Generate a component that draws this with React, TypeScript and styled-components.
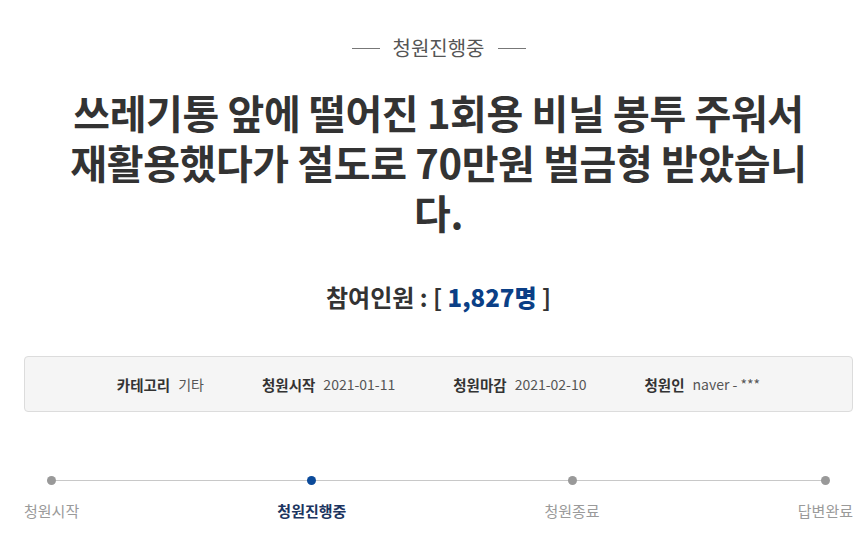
import styled, { createGlobalStyle } from 'styled-components'

const GlobalStyle = createGlobalStyle`
  * { box-sizing: border-box; }
  body {
    margin: 0;
    background: #fff;
    font-family: 'Noto Sans CJK KR', 'Noto Sans', sans-serif;
    color: #333;
  }
`

const steps = [
  { label: '청원시작', active: false },
  { label: '청원진행중', active: true },
  { label: '청원종료', active: false },
  { label: '답변완료', active: false },
]

const info = [
  { term: '카테고리', value: '기타' },
  { term: '청원시작', value: '2021-01-11' },
  { term: '청원마감', value: '2021-02-10' },
  { term: '청원인', value: 'naver - ***' },
]

export default function App() {
  return (
    <Page>
      <GlobalStyle />
      <Status>청원진행중</Status>
      <Title>쓰레기통 앞에 떨어진 1회용 비닐 봉투 주워서 재활용했다가 절도로 70만원 벌금형 받았습니다.</Title>
      <Count>
        참여인원 : [ <strong>1,827명</strong> ]
      </Count>
      <InfoBox>
        {info.map((row) => (
          <InfoItem key={row.term}>
            <b>{row.term}</b>
            <span>{row.value}</span>
          </InfoItem>
        ))}
      </InfoBox>
      <Steps>
        {steps.map((step) => (
          <Step key={step.label} $active={step.active}>
            <Dot $active={step.active} />
            {step.label}
          </Step>
        ))}
      </Steps>
    </Page>
  )
}

const Page = styled.div`
  width: 861px;
  padding: 34px 8px 0 24px;
  display: flex;
  flex-direction: column;
  align-items: center;
`

const Status = styled.div`
  display: flex;
  align-items: center;
  gap: 13px;
  font-size: 20px;
  line-height: 28px;
  color: #555;

  &::before,
  &::after {
    content: '';
    width: 28px;
    height: 1px;
    background: #777;
  }
`

const Title = styled.h1`
  margin: 25px 0 0;
  width: 750px;
  font-size: 40px;
  line-height: 50px;
  font-weight: 700;
  text-align: center;
  color: #333;
  letter-spacing: -0.4px;
  word-break: normal;
  line-break: anywhere;
`

const Count = styled.div`
  margin-top: 45px;
  font-size: 24px;
  line-height: 30px;
  font-weight: 700;
  color: #333;

  strong {
    color: #0b3f86;
  }
`

const InfoBox = styled.div`
  margin-top: 44px;
  align-self: stretch;
  height: 56px;
  display: flex;
  justify-content: center;
  align-items: center;
  gap: 58px;
  background: #f5f5f5;
  border: 1px solid #dcdcdc;
  border-radius: 4px;
`

const InfoItem = styled.div`
  display: flex;
  gap: 8px;
  font-size: 14px;
  color: #555;

  b {
    color: #333;
    font-weight: 700;
    font-size: 14.5px;
  }
`

const Steps = styled.div`
  position: relative;
  margin-top: 64px;
  align-self: stretch;
  display: flex;
  justify-content: space-between;

  &::before {
    content: '';
    position: absolute;
    top: 4px;
    left: 26px;
    right: 27px;
    height: 1px;
    background: #c8c8c8;
  }
`

const Step = styled.div<{ $active: boolean }>`
  position: relative;
  display: flex;
  flex-direction: column;
  align-items: center;
  gap: 16px;
  font-size: 15px;
  line-height: 20px;
  color: ${(p) => (p.$active ? '#1c3560' : '#9a9a9a')};
  font-weight: ${(p) => (p.$active ? 700 : 400)};
`

const Dot = styled.span<{ $active: boolean }>`
  width: 9px;
  height: 9px;
  border-radius: 50%;
  background: ${(p) => (p.$active ? '#0b4a9a' : '#999')};
`
